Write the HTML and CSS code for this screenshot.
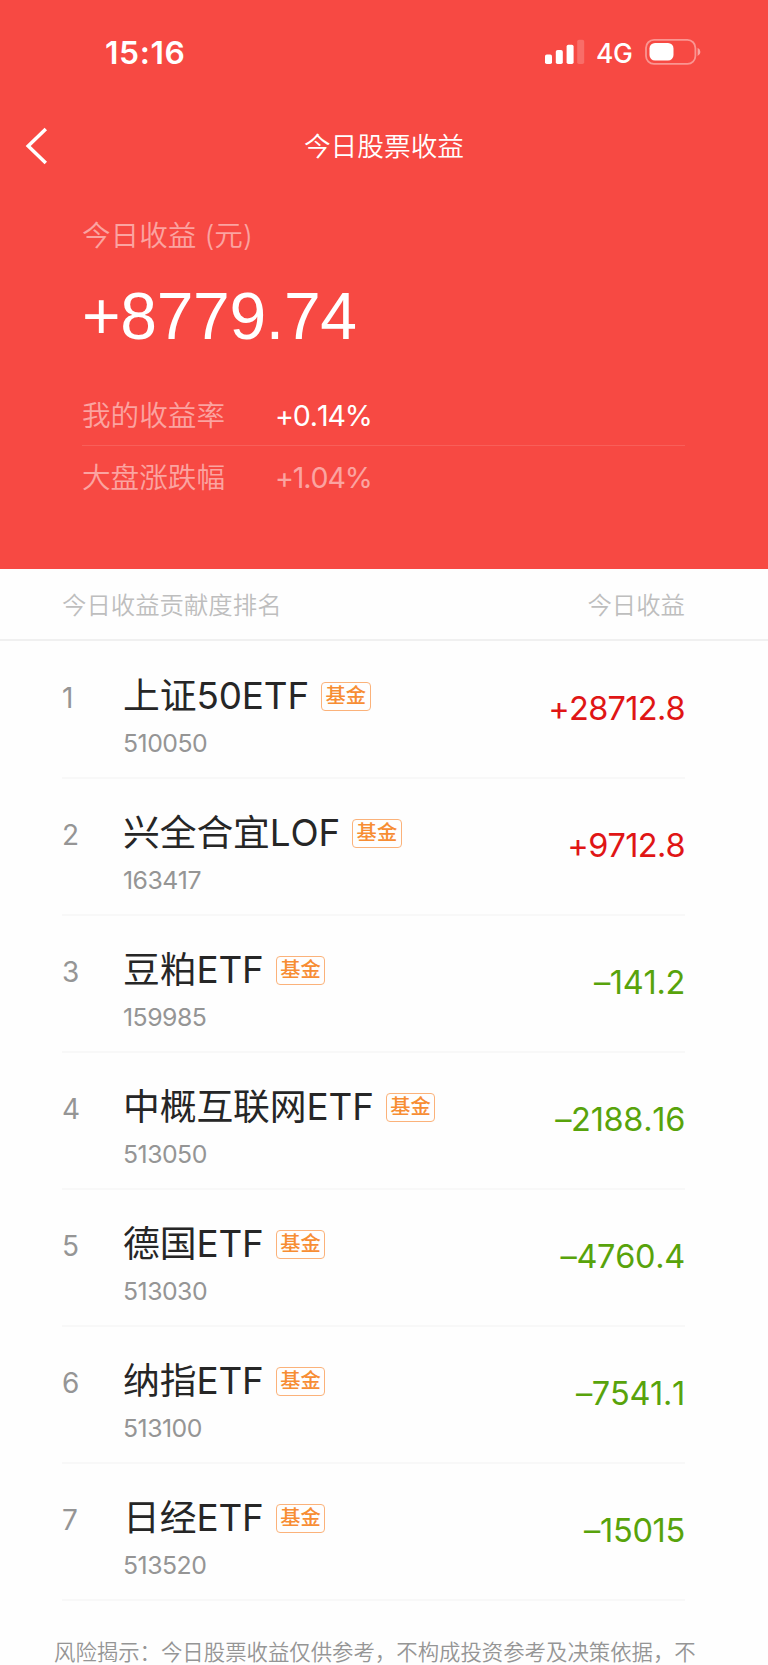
FILE: index.html
```html
<!DOCTYPE html>
<html lang="zh-CN">
<head>
    <meta charset="UTF-8">
    <meta name="viewport" content="width=device-width, initial-scale=1.0">
    <title>今日股票收益</title>
    <link rel="stylesheet" href="styles.css">
</head>
<body>
    <header class="top">
        <div class="status-bar">
            <span class="time">15:16</span>
            <div class="status-icons">
                <svg class="signal" width="40" height="26" viewBox="0 0 40 26">
                    <rect x="0" y="15.5" width="7" height="9.5" rx="1.8"/>
                    <rect x="10.8" y="11" width="7" height="14" rx="1.8"/>
                    <rect x="21.6" y="5.7" width="7" height="19.3" rx="1.8"/>
                    <rect x="32.2" y="0.7" width="7" height="24.3" rx="1.8" opacity="0.2"/>
                </svg>
                <span class="network">4G</span>
                <svg class="battery" width="57" height="26" viewBox="0 0 57 26">
                    <rect class="battery-case" x="1" y="0.9" width="49.4" height="24" rx="8"/>
                    <rect x="4.5" y="4" width="24" height="17.6" rx="5.5"/>
                    <path d="M52.6 8.8 Q55.4 10 55.4 12.9 Q55.4 15.8 52.6 17 Z" opacity="0.5"/>
                </svg>
            </div>
        </div>

        <nav class="nav">
            <svg class="back" width="24" height="38" viewBox="0 0 24 38">
                <path d="M20.8 2 L3.2 19 L20.8 36"/>
            </svg>
            <h1 class="title">今日股票收益</h1>
        </nav>

        <section class="summary">
            <p class="label">今日收益 (元)</p>
            <p class="total">+8779.74</p>
            <div class="rate">
                <span class="rate-name">我的收益率</span>
                <span class="rate-value">+0.14%</span>
            </div>
            <div class="rate market">
                <span class="rate-name">大盘涨跌幅</span>
                <span class="rate-value">+1.04%</span>
            </div>
        </section>
    </header>

    <div class="list-head">
        <span>今日收益贡献度排名</span>
        <span>今日收益</span>
    </div>

    <ul class="list">
        <li class="row">
            <span class="rank">1</span>
            <div class="stock">
                <div class="name">上证50ETF<span class="tag">基金</span></div>
                <div class="code">510050</div>
            </div>
            <span class="profit up">+28712.8</span>
        </li>
        <li class="row">
            <span class="rank">2</span>
            <div class="stock">
                <div class="name">兴全合宜LOF<span class="tag">基金</span></div>
                <div class="code">163417</div>
            </div>
            <span class="profit up">+9712.8</span>
        </li>
        <li class="row">
            <span class="rank">3</span>
            <div class="stock">
                <div class="name">豆粕ETF<span class="tag">基金</span></div>
                <div class="code">159985</div>
            </div>
            <span class="profit down">–141.2</span>
        </li>
        <li class="row">
            <span class="rank">4</span>
            <div class="stock">
                <div class="name">中概互联网ETF<span class="tag">基金</span></div>
                <div class="code">513050</div>
            </div>
            <span class="profit down">–2188.16</span>
        </li>
        <li class="row">
            <span class="rank">5</span>
            <div class="stock">
                <div class="name">德国ETF<span class="tag">基金</span></div>
                <div class="code">513030</div>
            </div>
            <span class="profit down">–4760.4</span>
        </li>
        <li class="row">
            <span class="rank">6</span>
            <div class="stock">
                <div class="name">纳指ETF<span class="tag">基金</span></div>
                <div class="code">513100</div>
            </div>
            <span class="profit down">–7541.1</span>
        </li>
        <li class="row">
            <span class="rank">7</span>
            <div class="stock">
                <div class="name">日经ETF<span class="tag">基金</span></div>
                <div class="code">513520</div>
            </div>
            <span class="profit down">–15015</span>
        </li>
    </ul>

    <p class="notice">风险揭示：今日股票收益仅供参考，不构成投资参考及决策依据，不</p>
</body>
</html>
```
FILE: styles.css
```css
* {
    box-sizing: border-box;
}

body {
    margin: 0;
    width: 768px;
    height: 1665px;
    overflow: hidden;
    background: #fefefe;
    font-family: Inter, "Noto Sans CJK SC", sans-serif;
    font-weight: 400;
}

h1, p, ul {
    margin: 0;
    padding: 0;
    font-weight: inherit;
}

/* red header */
.top {
    height: 568.5px;
    background: #f74943;
    color: #fff;
}

.status-bar {
    display: flex;
    justify-content: space-between;
    height: 98px;
    padding: 32px 66px 0 105px;
}

.time {
    font-size: 31.8px;
    font-weight: 600;
    line-height: 41px;
    letter-spacing: 0.6px;
}

.status-icons {
    display: flex;
    align-items: flex-start;
    padding-top: 7px;
    fill: #fff;
}

.network {
    width: 36px;
    margin-left: 11.5px;
    font-size: 26.5px;
    font-weight: 500;
    line-height: 28px;
    letter-spacing: -0.5px;
}

.battery {
    margin-left: 13px;
}

.battery-case {
    fill: none;
    stroke: rgba(255, 255, 255, 0.42);
    stroke-width: 1.8;
}

.nav {
    display: grid;
    grid-template-columns: 100px 1fr 100px;
    align-items: center;
    height: 95px;
}

.back {
    margin-left: 24.5px;
    fill: none;
    stroke: #fff;
    stroke-width: 3.5;
}

.title {
    font-size: 26.7px;
    font-weight: 350;
    line-height: 40px;
    text-align: center;
}

.summary {
    padding: 22px 83px 0 82px;
}

.label {
    font-size: 28.6px;
    font-weight: 350;
    line-height: 42px;
    color: rgba(255, 255, 255, 0.5);
}

.total {
    margin-top: 19px;
    font-family: "Liberation Sans", Arial, sans-serif;
    font-size: 66px;
    line-height: 80px;
    letter-spacing: -0.3px;
}

.rate {
    display: flex;
    height: 61px;
    margin-top: 29px;
    padding-top: 10px;
    line-height: 42px;
    font-size: 28.6px;
    border-bottom: 1px solid rgba(255, 255, 255, 0.12);
}

.rate-name {
    width: 193px;
    font-weight: 350;
    color: rgba(255, 255, 255, 0.5);
}

.rate-value {
    font-kerning: none;
    letter-spacing: -1.1px;
}

.market {
    margin-top: 0;
    padding-top: 11px;
    border-bottom: none;
}

.market .rate-value {
    color: rgba(255, 255, 255, 0.5);
}

/* ranking */
.list-head {
    display: flex;
    justify-content: space-between;
    height: 72.5px;
    padding: 16px 83px 0 62px;
    border-bottom: 2px solid #f0f0f0;
    font-size: 24.4px;
    font-weight: 350;
    line-height: 40px;
    color: #bebebe;
}

.list {
    margin: 0 83px 0 62px;
    padding-top: 1px;
    list-style: none;
}

.row {
    display: flex;
    align-items: flex-start;
    height: 137px;
    border-bottom: 2px solid #f8f8f8;
}

.rank {
    width: 61px;
    margin-top: 31px;
    font-size: 28px;
    font-weight: 380;
    line-height: 50px;
    color: #959595;
}

.stock {
    flex: 1;
    margin-top: 29px;
}

.name {
    display: flex;
    align-items: center;
    font-size: 36.8px;
    line-height: 50px;
    font-kerning: none;
    letter-spacing: -0.1px;
    color: #262626;
}

.tag {
    width: 49.5px;
    height: 29px;
    margin-left: 12px;
    border: 1.5px solid #fbb27a;
    border-radius: 4px;
    font-size: 20.3px;
    font-weight: 500;
    line-height: 26.5px;
    letter-spacing: 0;
    text-align: center;
    color: #f78d33;
}

.code {
    margin-top: 7px;
    font-size: 24.8px;
    font-weight: 380;
    line-height: 30px;
    font-kerning: none;
    letter-spacing: -0.5px;
    color: #959595;
}

.profit {
    margin-top: 47px;
    font-size: 32.5px;
    font-weight: 380;
    line-height: 40px;
    font-kerning: none;
    letter-spacing: -0.7px;
}

.up {
    color: #e01515;
}

.down {
    letter-spacing: -0.3px;
    color: #58a30b;
}

.notice {
    padding: 36px 0 0 54px;
    font-size: 21.4px;
    font-weight: 350;
    line-height: 30px;
    white-space: nowrap;
    color: #959595;
}
```
